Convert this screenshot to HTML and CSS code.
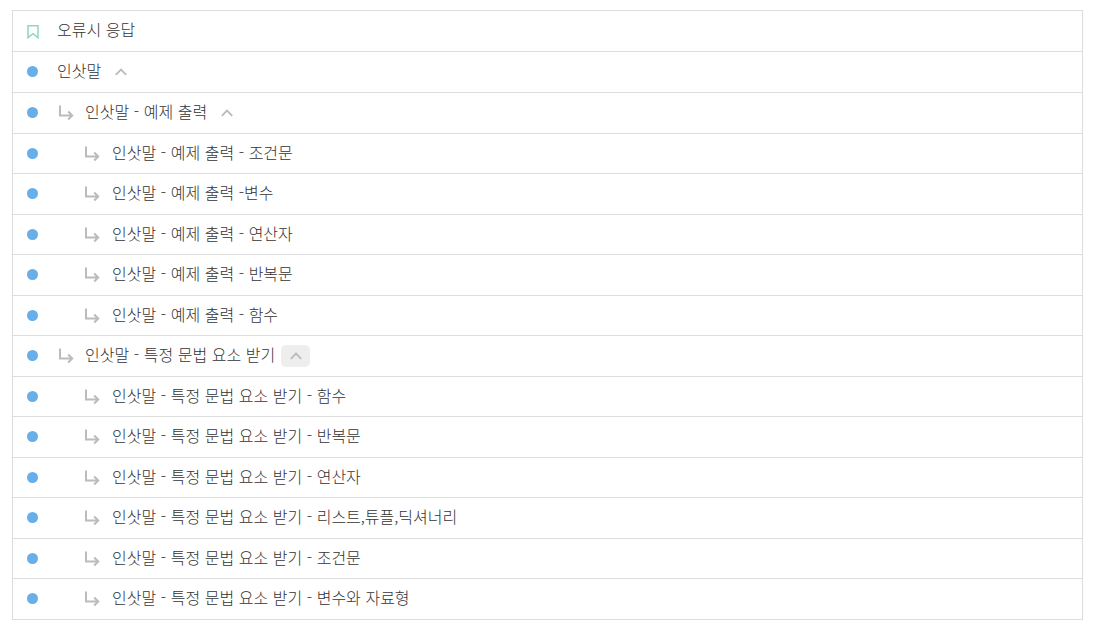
FILE: index.html
```html
<!DOCTYPE html>
<html lang="ko">
<head>
<meta charset="utf-8">
<title>오류시 응답</title>
<link rel="stylesheet" href="styles.css">
</head>
<body>
<svg class="defs" width="0" height="0" aria-hidden="true">
  <symbol id="arrow" viewBox="0 0 16 16"><path d="M2 .5v10h12M10.200 6.500l4 4-4 4" fill="none" stroke="currentColor" stroke-width="2"/></symbol>
  <symbol id="chev" viewBox="0 0 12 8"><path d="M.8 6.800 6 1.600l5.200 5.200" fill="none" stroke="currentColor" stroke-width="1.800"/></symbol>
</svg>
<ul class="list">
  <li class="row first"><svg class="bookmark" viewBox="0 0 12 14"><path d="M1 .7h10v12L6 8.600 1 12.700z" fill="none" stroke="currentColor" stroke-width="1.500"/></svg><span class="label">오류시 응답</span></li>
  <li class="row second"><i class="dot"></i><span class="label">인삿말</span><span class="toggle"><svg class="chev"><use href="#chev"/></svg></span></li>
  <li class="row third l1"><i class="dot"></i><svg class="arrow"><use href="#arrow"/></svg><span class="label">인삿말 - 예제 출력</span><span class="toggle"><svg class="chev"><use href="#chev"/></svg></span></li>
  <li class="row l2"><i class="dot"></i><svg class="arrow"><use href="#arrow"/></svg><span class="label">인삿말 - 예제 출력 - 조건문</span></li>
  <li class="row l2"><i class="dot"></i><svg class="arrow"><use href="#arrow"/></svg><span class="label">인삿말 - 예제 출력 -변수</span></li>
  <li class="row l2"><i class="dot"></i><svg class="arrow"><use href="#arrow"/></svg><span class="label">인삿말 - 예제 출력 - 연산자</span></li>
  <li class="row l2"><i class="dot"></i><svg class="arrow"><use href="#arrow"/></svg><span class="label">인삿말 - 예제 출력 - 반복문</span></li>
  <li class="row l2"><i class="dot"></i><svg class="arrow"><use href="#arrow"/></svg><span class="label">인삿말 - 예제 출력 - 함수</span></li>
  <li class="row l1"><i class="dot"></i><svg class="arrow"><use href="#arrow"/></svg><span class="label">인삿말 - 특정 문법 요소 받기</span><span class="toggle hover"><svg class="chev"><use href="#chev"/></svg></span></li>
  <li class="row l2"><i class="dot"></i><svg class="arrow"><use href="#arrow"/></svg><span class="label">인삿말 - 특정 문법 요소 받기 - 함수</span></li>
  <li class="row l2"><i class="dot"></i><svg class="arrow"><use href="#arrow"/></svg><span class="label">인삿말 - 특정 문법 요소 받기 - 반복문</span></li>
  <li class="row l2"><i class="dot"></i><svg class="arrow"><use href="#arrow"/></svg><span class="label">인삿말 - 특정 문법 요소 받기 - 연산자</span></li>
  <li class="row l2"><i class="dot"></i><svg class="arrow"><use href="#arrow"/></svg><span class="label">인삿말 - 특정 문법 요소 받기 - 리스트,튜플,딕셔너리</span></li>
  <li class="row l2"><i class="dot"></i><svg class="arrow"><use href="#arrow"/></svg><span class="label">인삿말 - 특정 문법 요소 받기 - 조건문</span></li>
  <li class="row l2"><i class="dot"></i><svg class="arrow"><use href="#arrow"/></svg><span class="label">인삿말 - 특정 문법 요소 받기 - 변수와 자료형</span></li>
</ul>
</body>
</html>
```
FILE: styles.css
```css
html, body { margin: 0; padding: 0; background: #fff; }
body {
  padding: 10px 13px 0 12px;
  font-family: "Noto Sans CJK KR", "Noto Sans", sans-serif;
  font-size: 16px;
  font-weight: 300;
  word-spacing: 0.1px;
  color: #333;
}
.defs { position: absolute; }
.list {
  list-style: none;
  margin: 0;
  padding: 0;
  border: 1px solid #ddd;
}
.row {
  display: flex;
  align-items: center;
  height: 40.5px;
  box-sizing: border-box;
  padding-left: 14px;
  border-top: 1px solid #ddd;
}
.row.first { height: 40px; border-top: 0; }
.row.second { height: 41px; }
.row.third { height: 40.9px; }
.label { padding-bottom: 4px; line-height: 24px; }
.dot {
  flex: none;
  width: 11px;
  height: 11px;
  border-radius: 50%;
  background: #68aee8;
  margin: 0 19px 1px 0;
}
.bookmark {
  flex: none;
  width: 12px;
  height: 14px;
  margin: 2px 18px 0 0;
  color: #8fd8bd;
}
.arrow {
  flex: none;
  width: 16px;
  height: 16px;
  margin: 0 11px 0 0;
  color: #bbb;
}
.l1 .arrow { margin-left: 1px; }
.l2 .dot { margin-right: 46px; }
.l2 .label { margin-left: 1px; }
.toggle {
  flex: none;
  display: flex;
  align-items: center;
  justify-content: center;
  width: 29px;
  height: 22px;
  margin-left: 5px;
  border-radius: 5px;
  color: #bbb;
}
.toggle.hover { margin-left: 6px; background: #eee; }
.chev { width: 12px; height: 8px; }
```
